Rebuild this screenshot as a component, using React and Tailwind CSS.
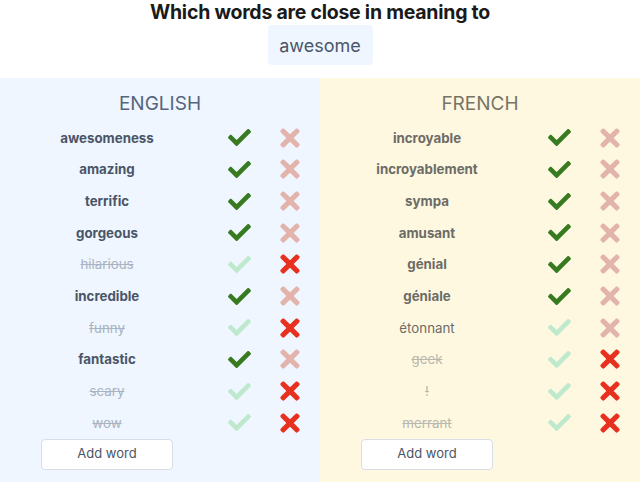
import React from "react";
import { FaCheck, FaTimes } from "react-icons/fa";

const english = [
  { w: "awesomeness", s: "yes" },
  { w: "amazing", s: "yes" },
  { w: "terrific", s: "yes" },
  { w: "gorgeous", s: "yes" },
  { w: "hilarious", s: "no" },
  { w: "incredible", s: "yes" },
  { w: "funny", s: "no" },
  { w: "fantastic", s: "yes" },
  { w: "scary", s: "no" },
  { w: "wow", s: "no" },
];

const french = [
  { w: "incroyable", s: "yes" },
  { w: "incroyablement", s: "yes" },
  { w: "sympa", s: "yes" },
  { w: "amusant", s: "yes" },
  { w: "génial", s: "yes" },
  { w: "géniale", s: "yes" },
  { w: "étonnant", s: "none" },
  { w: "geek", s: "no" },
  { w: "!", s: "no" },
  { w: "merrant", s: "no" },
];

function Row({ item, fr }) {
  let cls = "";
  if (item.s === "yes") cls = fr ? "font-bold text-[#6c6c66]" : "font-bold text-[#4a5568]";
  else if (item.s === "none") cls = fr ? "text-[#6c6c66]" : "text-[#4a5568]";
  else cls = fr ? "line-through text-[#b8b8ae]" : "line-through text-[#a9b3c2]";
  const checkOn = item.s === "yes";
  const xOn = item.s === "no";
  return (
    <div className="flex items-center h-[31.67px]">
      <div className={"w-[214px] text-center text-[13.3px] leading-[20px] " + cls}>{item.w}</div>
      <div className="w-[50px] flex justify-center">
        <FaCheck size={23} className={checkOn ? "text-[#387a20]" : "text-[#bfe9cd]"} />
      </div>
      <div className="w-[52px] flex justify-center">
        <FaTimes size={28} className={xOn ? "text-[#e8301f]" : "text-[#e2b4ac]"} />
      </div>
    </div>
  );
}

function Panel({ title, items, fr }) {
  return (
    <div className={"flex-1 h-[404px] " + (fr ? "bg-[#fff8e1]" : "bg-[#eff6ff]")}>
      <div
        className={
          "pt-[14px] mb-[6px] text-center text-[19px] leading-[24px] w-[320px] " +
          (fr ? "text-[#777466]" : "text-[#55657d]")
        }
      >
        {title}
      </div>
      <div>
        {items.map((it) => (
          <Row key={it.w} item={it} fr={fr} />
        ))}
      </div>
      <div className="w-[214px] flex justify-center">
        <button className="w-[132px] h-[31px] bg-white border border-[#d9dee4] rounded-[4px] text-[13px] text-[#4a5568]">
          Add word
        </button>
      </div>
    </div>
  );
}

export default function App() {
  return (
    <div
      className="w-[640px] h-[482px] bg-white overflow-hidden"
      style={{ fontFamily: "Inter, 'Noto Sans', sans-serif" }}
    >
      <h1 className="text-center font-bold text-[19.5px] leading-[22px] text-[#1a1a1a] tracking-[-0.25px] pt-[1px]">
        Which words are close in meaning to
      </h1>
      <div className="flex justify-center mt-[2px]">
        <div className="w-[105px] h-[40px] bg-[#eff6ff] rounded-[4px] flex items-center justify-center text-[18px] text-[#4a5568]">
          awesome
        </div>
      </div>
      <div className="flex mt-[13px]">
        <Panel title="ENGLISH" items={english} />
        <Panel title="FRENCH" items={french} fr />
      </div>
    </div>
  );
}
